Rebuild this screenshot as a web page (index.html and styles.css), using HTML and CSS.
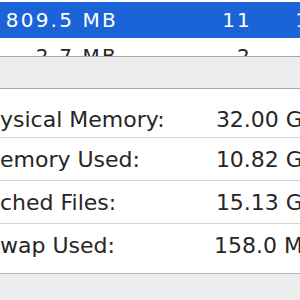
FILE: index.html
```html
<!DOCTYPE html>
<html lang="en">
<head>
  <meta charset="UTF-8">
  <title>Memory</title>
  <link rel="stylesheet" href="styles.css">
</head>
<body>
  <div class="page">

    <!-- process list, clipped by the scroll view -->
    <div class="proc-table">
      <div class="proc-row selected">
        <span>809.5 MB</span>
        <span>11</span>
        <span>1287</span>
      </div>
      <div class="proc-row">
        <span>2.7 MB</span>
        <span>2</span>
        <span>27</span>
      </div>
    </div>

    <div class="toolbar"></div>

    <!-- memory pressure stats -->
    <div class="stats">
      <div class="stat-row">
        <span class="label">ysical Memory:</span>
        <span class="value">32.00 GB</span>
      </div>
      <div class="stat-row">
        <span class="label">emory Used:</span>
        <span class="value">10.82 GB</span>
      </div>
      <div class="stat-row">
        <span class="label">ched Files:</span>
        <span class="value">15.13 GB</span>
      </div>
      <div class="stat-row">
        <span class="label">wap Used:</span>
        <span class="value">158.0 MB</span>
      </div>
    </div>

    <div class="footer"></div>
  </div>
</body>
</html>
```

FILE: styles.css
```css
/* activity monitor - memory tab */

html, body {
  margin: 0;
  padding: 0;
  overflow: hidden;
  background-color: #ececec;
}

.page {
  width: 360px;
  font-family: "DejaVu Sans", sans-serif;
  color: #262626;
}

/* Process table */
.proc-table {
  height: 54px;
  padding-top: 2px;
  background-color: #fff;
  border-bottom: 1px solid #a6a6a6;
  overflow: hidden;
}

.proc-row {
  display: grid;
  grid-template-columns: 118px 134px 103px;
  height: 36px;
  line-height: 36px;
  font-size: 20px;
  letter-spacing: 2.2px;
}

.proc-row span {
  text-align: right;
  white-space: nowrap;
}

.proc-row.selected {
  background-color: #1a64d8;
  color: #fff;
}

/* Toolbar strip */
.toolbar {
  height: 31px;
  background-color: #ececec;
  border-bottom: 1px solid #a9a9a9;
}

/* Stats panel */
.stats {
  background-color: #fff;
  padding: 0 42px 6px 0;
  border-bottom: 1px solid #b4b4b4;
}

.stat-row {
  display: flex;
  justify-content: space-between;
  align-items: center;
  box-sizing: border-box;
  height: 43px;
  font-size: 22px;
  border-bottom: 1px solid #d6d6d6;
}

.stat-row:first-child {
  height: 49px;
  padding-top: 12px;
}

.stat-row:last-child {
  border-bottom: none;
}

.label,
.value {
  white-space: nowrap;
}

.footer {
  height: 40px;
  background-color: #ececec;
}
```
